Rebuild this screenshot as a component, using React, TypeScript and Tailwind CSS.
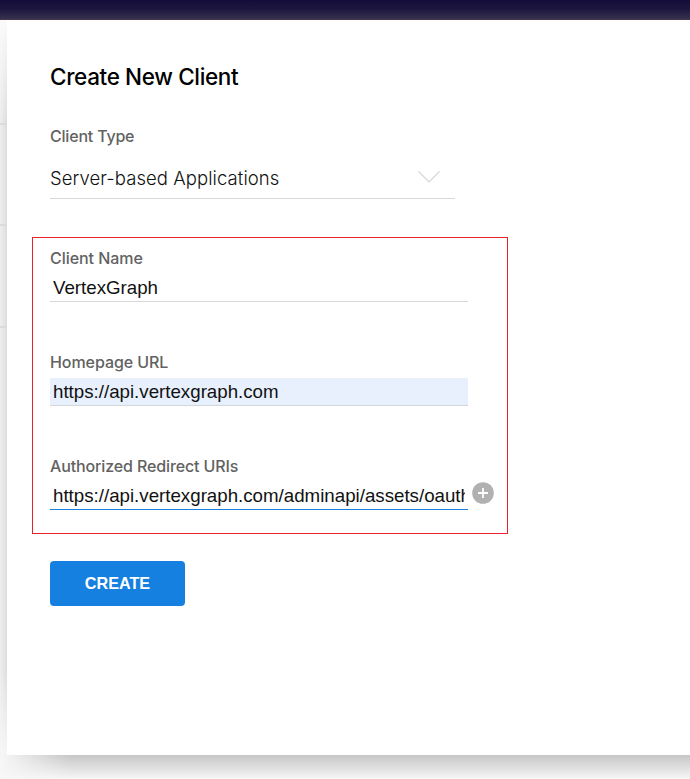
const label =
  "block h-5 whitespace-nowrap font-['Inter',sans-serif] text-[16px] leading-5 font-medium text-[#626262]";
const input =
  "block h-7 w-[418px] border-b px-[3px] font-['Liberation_Sans',Arial,sans-serif] text-[18.72px] leading-[27px] text-[#111] outline-none";

export default function App() {
  return (
    <div className="flex h-[779px] w-[690px] flex-col overflow-hidden bg-[#f7f7f7]">
      <header className="h-5 shrink-0 border-b border-[#41364a] bg-linear-to-b from-[#130c38] via-[#1e1840] to-[#36314e]" />
      <div className="flex h-[735px] shrink-0">
        <aside className="flex w-[7px] flex-col bg-linear-to-r from-[#eeeeee] to-[#dddddd]">
          <div className="h-[105px] border-b-2 border-[#dadada] bg-linear-to-b from-[#fafafa] to-transparent" />
          <div className="h-[101px] border-b-2 border-[#dadada]" />
          <div className="h-[102px] border-b-2 border-[#dadada]" />
          <div className="flex-1 bg-linear-to-b from-transparent from-80% to-[#f6f6f6]" />
        </aside>
        <main className="flex w-[683px] flex-col items-start bg-white">
          <h1 className="mt-[43px] ml-[43px] h-7 whitespace-nowrap font-['Inter',sans-serif] text-[22.5px] leading-7 font-medium tracking-[-0.36px] text-black">
            Create New Client
          </h1>
          <span className={`${label} mt-[35px] ml-[43px] tracking-[-0.2px]`}>Client Type</span>
          <div className="mt-[21px] ml-[43px] flex h-[32px] w-[405px] justify-between border-b border-[#d8d8d8] pr-[14px]">
            <span className="whitespace-nowrap font-['Inter',sans-serif] text-[18.5px] leading-[22px] font-light tracking-[0.07px] text-[#111]">
              Server-based Applications
            </span>
            <svg width="24" height="14" viewBox="0 0 24 14" fill="none" className="mt-[3px]">
              <path d="M1.5 1.5L12 12L22.5 1.5" stroke="#d6d6d6" strokeWidth="1.2" />
            </svg>
          </div>
          <section className="mt-[38px] ml-[25px] h-[297px] w-[476px] border border-[#e8212a] pt-[10px] pl-[17px]">
            <label className={`${label} tracking-[-0.05px]`}>Client Name</label>
            <input className={`${input} mt-[6px] border-[#d8d8d8]`} defaultValue="VertexGraph" />
            <label className={`${label} mt-[50px] tracking-[-0.07px]`}>Homepage URL</label>
            <input className={`${input} mt-[6px] border-[#d3d5d9] bg-[#e8f0fe]`} defaultValue="https://api.vertexgraph.com" />
            <label className={`${label} mt-[50px] tracking-[-0.13px]`}>Authorized Redirect URIs</label>
            <div className="mt-[6px] flex">
              <input className={`${input} border-[#1680df]`} defaultValue="https://api.vertexgraph.com/adminapi/assets/oauth/callback" />
              <svg width="22" height="22" viewBox="0 0 22 22" className="ml-1 shrink-0">
                <circle cx="11" cy="11" r="10.8" fill="#b1b1b1" />
                <path d="M6 11H16M11 6V16" stroke="white" strokeWidth="1.8" />
              </svg>
            </div>
          </section>
          <button className="mt-[27px] ml-[43px] h-[45px] w-[135px] rounded-[4px] bg-[#1580df] font-['Liberation_Sans',Arial,sans-serif] text-[16.2px] font-bold text-white">
            CREATE
          </button>
        </main>
      </div>
      <footer className="flex h-6 bg-linear-to-b from-[#c6c6c6] to-[#f7f7f7]">
        <div className="w-[70px] bg-linear-to-r from-[#f7f7f7] to-transparent" />
      </footer>
    </div>
  );
}
